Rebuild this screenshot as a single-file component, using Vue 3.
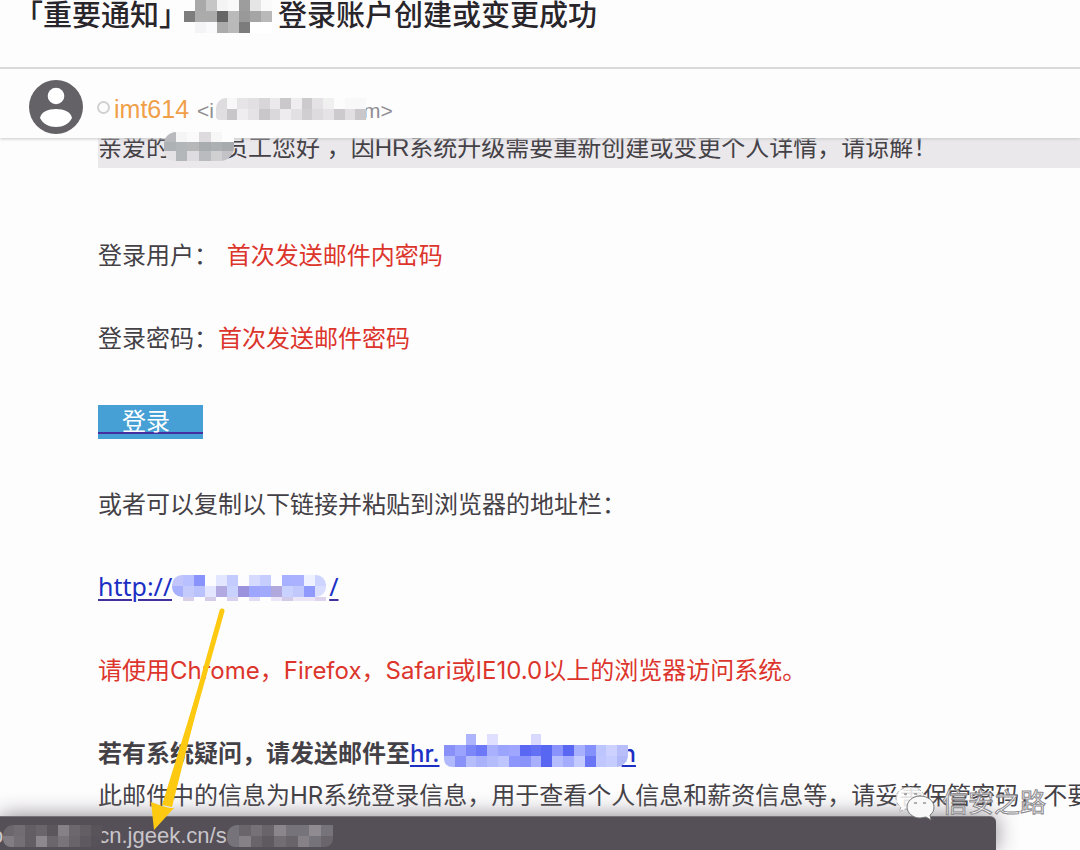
<script setup>
import { h } from 'vue'

const CELL = 11

// Each row is a space separated list of hex colours; "-" leaves the cell empty.
const Mosaic = (props) => {
  const rows = props.rows.map((row) => row.split(' '))
  const width = rows[0].length * CELL
  const height = rows.length * CELL
  const cells = rows.flatMap((row, y) =>
    row.map((fill, x) =>
      fill === '-' ? null : h('rect', { x: x * CELL, y: y * CELL, width: CELL, height: CELL, fill: '#' + fill })
    )
  )
  return h('svg', { width, height, viewBox: `0 0 ${width} ${height}`, preserveAspectRatio: 'none', 'shape-rendering': 'crispEdges', 'aria-hidden': 'true' }, cells)
}
Mosaic.props = ['rows']

const titleCells = [
  '- a9a9a9 c6c6c6 f4f4f4 f9f9f9 9d9d9d e5e5e5 fafafa',
  '7d7d7d ababab ababab 666666 bababa 999999 a5a5a5 b9b9b9',
  '- f4f3f5 faf9fb ababab b9b9b9 7c7c7c ffffff ffffff'
]
const addressCells = [
  'dedcde f8f8f8 e6e4e6 e2e0e2 d8d6d8 ebe9eb cac8ca efedef cccacc e4e2e4 f1f0f1 fcfcfc f8f8f8 f8f8f8',
  'e0dee0 c8c6c8 efedef e5e3e5 c9c7c9 dad8da eeecee e2e0e2 d0ced0 dddbdd e5e3e5 cccacc e1dfe1 c9c7c9'
]
const greetingCells = [
  'b8babd f5f5f5 fafafa dddbdd f7f7f7 fdfdfd',
  'aeb2b4 b3b6b8 b5b7b9 a9acaf adb0b3 a8abad',
  'e4e2e5 b4b7b9 dedce0 b9bbbe d0cfd2 c3c3c7'
]
const urlCells = [
  'c2c5fb b8c0ff 8993fc fcfcff e2e6ff c4ccff fcfcff d6daff c6ceff fdfdff a8b1ff aab2ff eef1ff ccd4ff',
  'a7b0fc c4cafc b9c2fd e4e5ff b1a9df c9d1ff 9a92dc 9da6fc a0a9fc b1a9dd c9d1ff c1c8fc 9099fc d9ddff'
]
const urlFoot = ['fefdff d8cfea fefdff d4cce9 fefdff d8d0ef fefdff e0dcf4 fefdff eae6f8 d2cae9 ebe6f7 ebe6f7 ddd3ec']
const mailCells = [
  '- - adb4fc - e0dfff - - - d9d8ff - - - - - - - -',
  '8991f8 9aa3ff 7b86f8 6c78f7 a9b1ff 9ba4fd 9ea6ff 5967f2 6370f3 5867f1 8a93fb 5967f3 a7afff 8490fb bdc5ff ccd1ff b7bef9',
  'b1b9fd 8892f9 b5bdfb aab2fb b4bcfc bec5ff 8c96fc 8993f9 a8b0fd 5866f1 b5bdff a4acff c3caff 6975f5 c0c7ff c5ccff b0b8f8'
]
const statusLeft = [
  '6b676c 716d72 625e63 69656a 5b565c 858187 6b676c 625e63 58545a',
  '817d82 736f74 625e63 8c888d 6a666b 78747a 68646a 5e5960 57525a'
]
const statusRight = [
  '77737a 69656b 757177 68646a 8a868c 77737a 77737a 8f8b91 77737a',
  '77737a 858187 68646a 5e5a60 716d73 68646a 858187 77737a 69656b'
]
</script>

<template>
  <main class="mail">
    <header class="subject">
      <h1>「重要通知」<span class="gap gap-title"><Mosaic class="mosaic m-title" :rows="titleCells" /></span>登录账户创建或变更成功</h1>
    </header>

    <section class="sender">
      <svg class="avatar" viewBox="0 0 54 54" role="img" aria-label="imt614">
        <circle cx="27" cy="27" r="27" fill="#646266" />
        <circle cx="27" cy="16" r="8.3" fill="#fff" />
        <path d="M11 38C12 32 19 29 27 29s15 3 16 9c-3 6-9 9-16 9s-13-3-16-9Z" fill="#fff" />
      </svg>
      <span class="presence"></span>
      <span class="name">imt614</span>
      <span class="address">&lt;i<span class="gap gap-address"><Mosaic class="mosaic m-address" :rows="addressCells" /></span>m&gt;</span>
    </section>

    <article class="body">
      <p class="greeting">亲爱的<span class="gap gap-greeting"><Mosaic class="mosaic m-greeting" :rows="greetingCells" /></span>员工您好&nbsp;，因HR系统升级需要重新创建或变更个人详情，请谅解！</p>
      <div class="lines">
        <p>登录用户： <span class="red wide">首次发送邮件内密码</span></p>
        <p>登录密码：<span class="red">首次发送邮件密码</span></p>
        <p class="action"><a class="login" href="#">登录</a></p>
        <p>或者可以复制以下链接并粘贴到浏览器的地址栏：</p>
        <p><a class="url" href="#">http://<span class="gap gap-url"><Mosaic class="mosaic m-url" :rows="urlCells" /><Mosaic class="mosaic m-foot" :rows="urlFoot" /></span>/</a></p>
        <p class="red">请使用Chrome，Firefox，Safari或IE10.0以上的浏览器访问系统。</p>
        <div>
          <p class="strong">若有系统疑问，请发送邮件至<a href="#">hr.<span class="gap gap-mail"><Mosaic class="mosaic m-mail" :rows="mailCells" /></span>n</a></p>
          <p>此邮件中的信息为HR系统登录信息，用于查看个人信息和薪资信息等，请妥善保管密码，不要</p>
        </div>
      </div>
    </article>

    <footer class="status">
      <span>o</span><span class="gap gap-left"><Mosaic class="mosaic m-status" :rows="statusLeft" /></span><span>cn.jgeek.cn/s</span><span class="gap gap-right"><Mosaic class="mosaic m-status m-wide" :rows="statusRight" /></span>
    </footer>

    <div class="watermark">
      <svg viewBox="0 0 42 36" width="42" height="36" aria-hidden="true">
        <path d="M16 2C8 2 2 7 2 13c0 4 2 7 5 9l-2 5 6-3 6 1h3C17 14 25 9 30 10 28 5 22 2 16 2Z" fill="#fff" fill-opacity=".85" stroke="#aaa" stroke-width="1" stroke-dasharray="4 2" />
        <path d="M26 11c-7 0-13 5-13 11s6 11 13 11l6-1 5 3-1-5c3-2 4-5 4-8 0-6-6-11-14-11Z" fill="#f8f8f8" stroke="#777" stroke-width="1" />
        <path d="M20 18h3M29 18h3M10 9h3M20 9h3" stroke="#666" stroke-width="1" />
      </svg>
      <span>信安之路</span>
    </div>

    <svg class="arrow" viewBox="0 0 80 226" width="80" height="226" aria-hidden="true">
      <path d="M72 4 18 196" stroke="#fdc911" stroke-width="5" stroke-linecap="round" />
      <path d="M46 88 50 89 22 200 12 198Z" fill="#fdc911" />
      <path d="M4 223 1 195 12 199 20 201 24 201Z" fill="#fdc911" />
    </svg>
  </main>
</template>

<style>
body {
  margin: 0;
  background: #fefdfe;
}
</style>

<style scoped>
.mail {
  position: relative;
  min-height: 100vh;
  overflow: hidden;
  box-sizing: border-box;
  background: #fefdfe;
  color: #444146;
  font-family: "Liberation Sans", "Noto Sans CJK SC", sans-serif;
  font-size: 24px;
  line-height: 42px;
  white-space: nowrap;
}
h1, p {
  margin: 0;
}
.subject {
  height: 67px;
  border-bottom: 2px solid #dddcdd;
}
h1 {
  padding-left: 14px;
  font-size: 29px;
  font-weight: 500;
  line-height: 32px;
  color: #29262b;
}
.sender {
  position: relative;
  z-index: 1;
  display: flex;
  align-items: center;
  height: 69px;
  padding-left: 29px;
  background: #fefdfe;
  box-shadow: 0 1px 3px #c9c8cb;
}
.avatar {
  width: 54px;
  height: 54px;
  margin-top: 6px;
}
.presence {
  box-sizing: border-box;
  width: 13px;
  height: 13px;
  margin: 8px 4px 0 14px;
  border: 2px solid #d2d0d2;
  border-radius: 50%;
}
.name {
  margin: 10px 8px 0 0;
  font-size: 25px;
  color: #f0a049;
}
.address {
  margin-top: 14px;
  font-size: 21px;
  color: #8f8d91;
}
.gap {
  position: relative;
  display: inline-block;
  height: 1px;
}
.mosaic {
  position: absolute;
  z-index: 2;
}
.gap-title { width: 90px; }
.m-title { left: -4px; top: -25px; }
.gap-address { width: 149px; }
.m-address { left: 2px; bottom: -2px; width: 150px; border-radius: 10px 0 0 4px; }
.gap-greeting { width: 54px; }
.m-greeting { left: -6px; bottom: -5px; width: 70px; height: 29px; border-radius: 12px 0 14px 10px; }
.gap-url { width: 157px; }
.m-url { left: 0; top: -20px; border-radius: 10px; }
.m-foot { left: 0; top: 2px; height: 4px; }
.gap-mail { width: 182px; }
.m-mail { left: 4px; bottom: -5px; width: 184px; border-radius: 0 12px 12px 8px; }

.greeting {
  margin-top: -12px;
  margin-left: 98px;
  padding-top: 1px;
  line-height: 41px;
  background: #eae8eb;
}
.lines {
  display: flex;
  flex-direction: column;
  gap: 41px;
  padding: 67px 0 30px 98px;
  font-family: Inter, "Noto Sans CJK SC", sans-serif;
}
.red {
  color: #dc352c;
}
.wide {
  margin-left: 2px;
}
a {
  color: #1b2fc4;
  text-decoration: underline;
  text-decoration-thickness: 2px;
  text-underline-offset: 3px;
}
.url {
  font-family: "Noto Sans", sans-serif;
  font-size: 25px;
  line-height: 30px;
  text-decoration-color: #43309f;
}
.action {
  display: flex;
  align-items: center;
  height: 42px;
}
.login {
  padding: 0 33px 0 24px;
  background: linear-gradient(#482fa0, #482fa0) 0 27px / 100% 2px no-repeat #469fd5;
  color: #fff;
  line-height: 34px;
  text-decoration: none;
}
.strong {
  font-weight: 700;
}
.strong a {
  font-weight: 500;
}
.status {
  position: absolute;
  z-index: 2;
  bottom: 0;
  left: 0;
  right: 84px;
  display: flex;
  align-items: center;
  box-sizing: border-box;
  height: 34px;
  padding-top: 4px;
  border-top: 1px solid #76727a;
  border-radius: 0 6px 0 0;
  background: #554f57;
  box-shadow: 0 0 22px #858288;
  color: #c9c6cb;
  font-size: 22px;
  line-height: 28px;
}
.status > span:first-child {
  margin-left: -9px;
}
.status .gap {
  height: 22px;
}
.gap-left { width: 95px; }
.gap-right { width: 106px; }
.m-status { left: 0; top: 0; border-radius: 10px 0 8px 8px; }
.m-wide { width: 106px; }
.watermark {
  position: absolute;
  z-index: 3;
  right: 34px;
  bottom: 28px;
  display: flex;
  align-items: center;
  gap: 6px;
}
.watermark span {
  color: #fffc;
  font-size: 26px;
  line-height: 38px;
  -webkit-text-stroke: 1px #8a888c;
}
.arrow {
  position: absolute;
  z-index: 4;
  left: 150px;
  top: 607px;
  fill: none;
}
</style>
